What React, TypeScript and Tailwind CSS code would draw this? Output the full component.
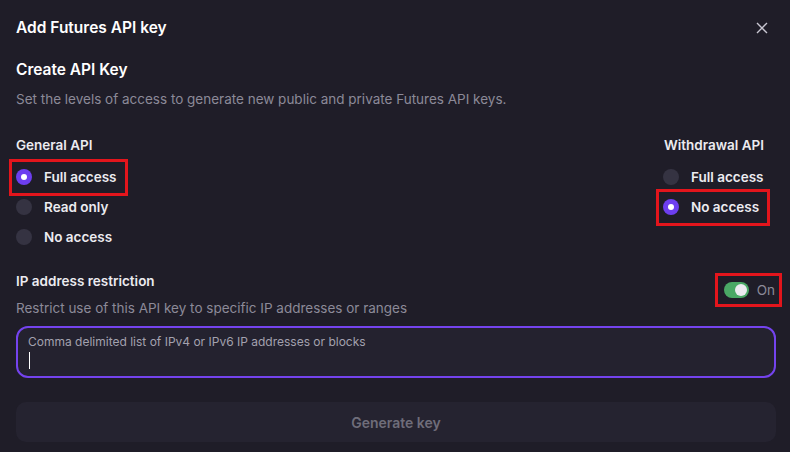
import React from "react";

function Radio({ checked }: { checked: boolean }) {
  return checked ? (
    <span className="flex h-4 w-4 items-center justify-center rounded-full bg-[#6d3ef0]">
      <span className="h-[6px] w-[6px] rounded-full bg-white" />
    </span>
  ) : (
    <span className="h-4 w-4 rounded-full bg-[#353342]" />
  );
}

function Option({ label, checked, boxed }: { label: string; checked: boolean; boxed?: boolean }) {
  return (
    <div className="relative flex h-[30px] w-fit items-center gap-[12px]">
      <Radio checked={checked} />
      <span className="text-[13.5px] font-semibold text-[#ecebf0]">{label}</span>
      {boxed && (
        <span className="pointer-events-none absolute -left-[7px] -right-[11px] top-[-3px] bottom-[-4px] border-[3px] border-[#e3151c]" />
      )}
    </div>
  );
}

export default function App() {
  return (
    <div
      className="h-[452px] w-[790px] overflow-hidden bg-[#1f1d28] pl-4 pr-[14px] text-white"
      style={{ fontFamily: "Inter, 'Noto Sans', sans-serif" }}
    >
      <div className="flex h-[56px] items-center justify-between">
        <h1 className="text-[15.5px] font-semibold text-white">Add Futures API key</h1>
        <svg width="12" height="12" viewBox="0 0 12 12" className="mr-[8px]">
          <path d="M1 1 L11 11 M11 1 L1 11" stroke="#c9c7d2" strokeWidth="1.4" />
        </svg>
      </div>
      <h2 className="mt-[2px] text-[15.5px] font-semibold text-white">Create API Key</h2>
      <p className="mt-[8px] text-[13.5px] text-[#8c8a98]">
        Set the levels of access to generate new public and private Futures API keys.
      </p>

      <div className="mt-[25px] flex justify-between">
        <div>
          <div className="mb-[7px] text-[13.5px] font-semibold text-[#ecebf0]">General API</div>
          <Option label="Full access" checked boxed />
          <Option label="Read only" checked={false} />
          <Option label="No access" checked={false} />
        </div>
        <div className="w-[113px]">
          <div className="mb-[7px] pl-[1px] text-[13.5px] font-semibold text-[#ecebf0]">Withdrawal API</div>
          <Option label="Full access" checked={false} />
          <Option label="No access" checked boxed />
        </div>
      </div>

      <div className="mt-[19px] flex items-start justify-between">
        <div>
          <div className="text-[13.5px] font-semibold text-[#ecebf0]">IP address restriction</div>
          <div className="mt-[7px] text-[13.5px] text-[#8c8a98]">
            Restrict use of this API key to specific IP addresses or ranges
          </div>
        </div>
        <div className="relative mr-[1px] mt-[9px] flex h-[20px] items-center gap-[8px]">
          <span className="flex h-[16px] w-[25px] items-center justify-end rounded-full bg-[#4aa865] pr-[2px]">
            <span className="h-[12px] w-[12px] rounded-full bg-[#eceaf0]" />
          </span>
          <span className="text-[13.5px] text-[#8c8a98]">On</span>
          <span className="pointer-events-none absolute -left-[9px] -right-[7px] top-[-7px] bottom-[-7px] border-[3px] border-[#e3151c]" />
        </div>
      </div>

      <div className="mt-[8px] h-[52px] rounded-[12px] border-2 border-[#7443ee] bg-[#24222f] px-[10px] pt-[6px]">
        <div className="text-[12px] leading-[16px] text-[#a3a1ae]">
          Comma delimited list of IPv4 or IPv6 IP addresses or blocks
        </div>
        <div className="ml-[1px] mt-[2px] h-[17px] w-[1px] bg-white" />
      </div>

      <button className="mt-[24px] flex h-[40px] w-full items-center justify-center rounded-[10px] bg-[#252330] text-[14px] font-semibold text-[#6f6d7a]">
        Generate key
      </button>
    </div>
  );
}
